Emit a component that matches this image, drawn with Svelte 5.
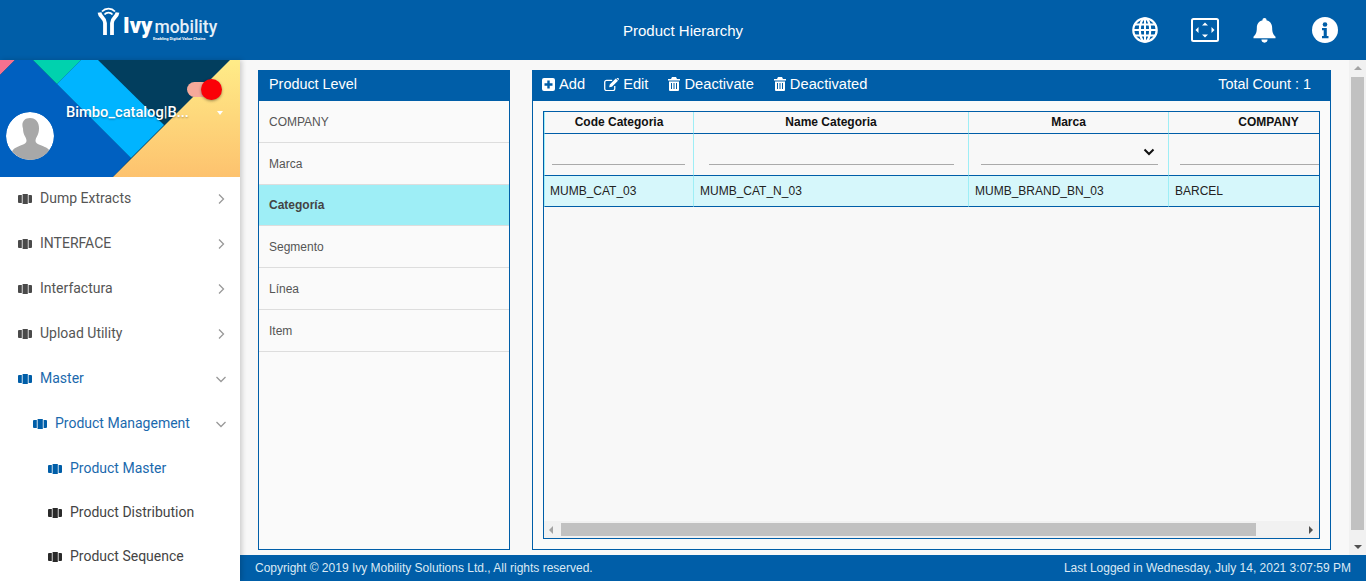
<script>
  const navIcon = "M1 1h2.800v8H1a1 1 0 0 1-1-1V2a1 1 0 0 1 1-1zM4.600 0h5.200v10H4.600zM10.600 1H13a1 1 0 0 1 1 1v6a1 1 0 0 1-1 1h-2.400z";

  const menu = [
    { label: "Dump Extracts", arrow: "right" },
    { label: "INTERFACE", arrow: "right" },
    { label: "Interfactura", arrow: "right" },
    { label: "Upload Utility", arrow: "right" },
    { label: "Master", arrow: "down", active: true },
    { label: "Product Management", arrow: "down", active: true, level: 1 },
    { label: "Product Master", active: true, level: 2 },
    { label: "Product Distribution", level: 2 },
    { label: "Product Sequence", level: 2 }
  ];

  const levels = ["COMPANY", "Marca", "Categoría", "Segmento", "Línea", "Item"];

  const columns = [
    { name: "Code Categoria", width: 150, value: "MUMB_CAT_03", pad: "0 8px 0 7px" },
    { name: "Name Categoria", width: 275, value: "MUMB_CAT_N_03", pad: "0 14px 0 15px" },
    { name: "Marca", width: 200, value: "MUMB_BRAND_BN_03", pad: "0 10px 0 12px", select: true },
    { name: "COMPANY", width: 200, value: "BARCEL", pad: "0 10px 0 11px" }
  ];

  const actions = [
    { label: "Add", icon: "add" },
    { label: "Edit", icon: "edit" },
    { label: "Deactivate", icon: "trash" },
    { label: "Deactivated", icon: "trash" }
  ];
</script>

<div class="page">
  <header class="topbar">
    <div class="logo">
      <svg class="logo-mark" viewBox="0 0 26 30" width="26" height="30" fill="none" stroke="#fff">
        <path d="M5 5.500A9 9 0 0 1 18 5.500" stroke-width="1.800" />
        <path d="M7.500 8.500A5.200 5.200 0 0 1 15.500 8.500" stroke-width="1.800" />
        <path d="M2.500 6.500C3 11.500 8 11.500 8 17V29" stroke-width="3.800" />
        <path d="M20.500 6.500C20 11.500 15 11.500 15 17V29" stroke-width="3.800" />
      </svg>
      <div class="logo-text">
        <div class="logo-name"><span class="ivy">Ivy</span><span class="mob">mobility</span></div>
        <div class="logo-tag">Enabling Digital Value Chains</div>
      </div>
    </div>
    <div class="title">Product Hierarchy</div>
    <div class="top-icons">
      <svg viewBox="0 0 26 26" width="26" height="26" fill="none" stroke="#fff" stroke-width="2.200">
        <circle cx="13" cy="13" r="11.700" />
        <ellipse cx="13" cy="13" rx="5.200" ry="11.700" />
        <path d="M13 1.300V24.700M1.300 13H24.700M3 7.500H23M3 18.500H23" stroke-width="2" />
      </svg>
      <svg viewBox="0 0 28 24" width="28" height="24">
        <rect x="1" y="1" width="26" height="22" rx="1.500" fill="none" stroke="#fff" stroke-width="2" />
        <path d="M14 4.500l3 3h-6zM14 19.500l-3-3h6zM4.500 12l3-3v6zM23.500 12l-3-3v6z" fill="#fff" />
      </svg>
      <svg class="bell" viewBox="0 0 24 26" width="23" height="25" fill="#fff">
        <path d="M12 0a2 2 0 0 1 2 2.400c4 .9 6 4 6 8 0 5.500 1.500 7 3.500 9v1.600H.5v-1.600c2-2 3.500-3.500 3.500-9 0-4 2-7.100 6-8A2 2 0 0 1 12 0z" />
        <path d="M8.800 22.500h6.400a3.200 3.200 0 0 1-6.400 0z" />
      </svg>
      <svg viewBox="0 0 26 26" width="26" height="26">
        <circle cx="13" cy="13" r="13" fill="#fff" />
        <circle cx="13" cy="7.500" r="2.300" fill="#005ea8" />
        <path d="M10 11h4.800v8H16.500v2.200h-6.500V19h1.700v-5.800H10z" fill="#005ea8" />
      </svg>
    </div>
  </header>

  <div class="body">
    <aside class="sidebar">
      <div class="banner">
        <svg class="banner-art" viewBox="0 0 240 117" width="240" height="117" preserveAspectRatio="none">
          <defs>
            <linearGradient id="sun" x1="0" y1="0" x2="0" y2="1">
              <stop offset="0" stop-color="#ffec88" />
              <stop offset="1" stop-color="#fdc26e" />
            </linearGradient>
          </defs>
          <rect width="240" height="117" fill="#023e5e" />
          <polygon points="0,0 15,0 0,15" fill="#f4718f" />
          <polygon points="15,0 33,0 131,98 113,117 0,117 0,15" fill="#0060c0" />
          <polygon points="33,0 81,0 57,24" fill="#00d2ae" />
          <polygon points="81,0 98,0 164,65 131,98 57,24" fill="#00b4ff" />
          <polygon points="230,0 240,0 240,117 113,117" fill="url(#sun)" />
        </svg>
        <div class="toggle"><span class="track"></span><span class="knob"></span></div>
        <div class="user-row">
          <div class="avatar">
            <svg viewBox="0 0 48 48" width="48" height="48">
              <circle cx="24" cy="24" r="24" fill="#fff" />
              <path d="M24 6c6 0 9 4.500 9 10.500 0 3-.8 5.500-1.800 7.500-1 2-1.700 3-1.700 5 0 2 2 3 6 4.500 5 2 7.500 3.500 8.500 6A24 24 0 0 1 24 48 24 24 0 0 1 6 39.500c1-2.500 3.500-4 8.500-6 4-1.500 6-2.500 6-4.500 0-2-.7-3-1.700-5-1-2-1.800-4.500-1.800-7.500C15 10.500 18 6 24 6z" fill="#a8a8a8" />
            </svg>
          </div>
          <div class="user-name">Bimbo_catalog|B...</div>
          <span class="caret"></span>
        </div>
      </div>

      <nav>
        {#each menu as item}
          <div class="nav-item lv{item.level ?? 0}" class:active={item.active}>
            <svg class="nav-icon" viewBox="0 0 14 10" width="14" height="10"><path d={navIcon} /></svg>
            <span class="nav-label">{item.label}</span>
            {#if item.arrow === "right"}
              <svg class="chev" viewBox="0 0 12 12" width="12" height="12"><path d="M4 1.500L8.500 6L4 10.500" /></svg>
            {:else if item.arrow === "down"}
              <svg class="chev" viewBox="0 0 12 12" width="12" height="12"><path d="M1.500 4L6 8.500L10.500 4" /></svg>
            {/if}
          </div>
        {/each}
      </nav>
    </aside>

    <div class="right">
      <div class="content-row">
        <main class="content">
          <section class="panel levels">
            <div class="panel-head">Product Level</div>
            <ul>
              {#each levels as level}
                <li class:selected={level === "Categoría"}>{level}</li>
              {/each}
            </ul>
          </section>

          <section class="panel grid-panel">
            <div class="panel-head toolbar">
              {#each actions as action}
                <span class="action">
                  {#if action.icon === "add"}
                    <svg viewBox="0 0 13 13" width="13" height="13">
                      <path fill="#fff" fill-rule="evenodd" d="M2 0h9a2 2 0 0 1 2 2v9a2 2 0 0 1-2 2H2a2 2 0 0 1-2-2V2a2 2 0 0 1 2-2zM5.300 2.500v2.800H2.500v2.400h2.800v2.800h2.400V7.700h2.800V5.300H7.700V2.500z" />
                    </svg>
                  {:else if action.icon === "edit"}
                    <svg viewBox="0 0 16 14" width="15" height="13">
                      <path fill="none" stroke="#fff" stroke-width="1.400" d="M11.500 8.500v3a2 2 0 0 1-2 2H2.700a2 2 0 0 1-2-2V4.500a2 2 0 0 1 2-2h6" />
                      <path fill="#fff" d="M5.500 10l.6-3L12.600.5l2.400 2.400-6.500 6.500zM13.200 0l2.400 2.400.2-.6a1 1 0 0 0 0-1.200L15 .1a1 1 0 0 0-1.400 0z" />
                    </svg>
                  {:else}
                    <svg class="trash" viewBox="0 0 12 14" width="12" height="14">
                      <path fill="#fff" fill-rule="evenodd" d="M4 0h4l1 2h3v1.500H0V2h3zM1 4.500h10V13a1 1 0 0 1-1 1H2a1 1 0 0 1-1-1zM3 6v6h1V6zM5.500 6v6h1V6zM8 6v6h1V6z" />
                    </svg>
                  {/if}
                  {action.label}
                </span>
              {/each}
              <span class="count">Total Count : 1</span>
            </div>

            <div class="panel-body">
              <div class="table-box">
                <div class="table-clip">
                  <table>
                    <colgroup>
                      {#each columns as col}
                        <col style="width: {col.width}px" />
                      {/each}
                    </colgroup>
                    <thead>
                      <tr class="names">
                        {#each columns as col}
                          <th>{col.name}</th>
                        {/each}
                      </tr>
                      <tr class="filters">
                        {#each columns as col}
                          <th style="padding: {col.pad}">
                            <div class="filter">
                              {#if col.select}
                                <svg viewBox="0 0 12 8" width="12" height="8"><path d="M1.500 1.500L6 6l4.500-4.500" /></svg>
                              {/if}
                            </div>
                          </th>
                        {/each}
                      </tr>
                    </thead>
                    <tbody>
                      <tr>
                        {#each columns as col}
                          <td>{col.value}</td>
                        {/each}
                      </tr>
                    </tbody>
                  </table>
                </div>
                <div class="hscroll">
                  <span class="arrow-left"></span>
                  <div class="hthumb"></div>
                  <span class="arrow-right"></span>
                </div>
              </div>
            </div>
          </section>
        </main>

        <div class="vscroll">
          <span class="arrow-up"></span>
          <div class="vthumb"></div>
          <span class="arrow-down"></span>
        </div>
      </div>

      <footer>
        <span>Copyright © 2019 Ivy Mobility Solutions Ltd., All rights reserved.</span>
        <span>Last Logged in Wednesday, July 14, 2021 3:07:59 PM</span>
      </footer>
    </div>
  </div>
</div>

<style>
  :global(body) {
    margin: 0;
    overflow: hidden;
  }

  .page {
    width: 1366px;
    height: 581px;
    display: flex;
    flex-direction: column;
    background: #f8f8f8;
    font-family: "Liberation Sans", Arial, sans-serif;
  }

  .topbar {
    height: 60px;
    flex: none;
    display: grid;
    grid-template-columns: 1fr auto 1fr;
    align-items: center;
    background: #005ea8;
    color: #fff;
  }

  .logo {
    display: flex;
    align-items: flex-start;
    padding-left: 97px;
    height: 48px;
    margin-top: -12px;
  }

  .logo-mark {
    margin-top: 6px;
  }

  .logo-text {
    margin: 17px 0 0 0;
    line-height: 1;
  }

  .logo-name {
    display: flex;
    align-items: baseline;
    height: 18px;
    font-family: Roboto, sans-serif;
  }

  .ivy {
    font-size: 22px;
    font-weight: 900;
    line-height: 18px;
  }

  .mob {
    font-size: 17.500px;
    font-weight: 500;
    line-height: 14px;
    margin-left: 2px;
    color: #e4eff8;
  }

  .logo-tag {
    font-family: Roboto, sans-serif;
    font-size: 4px;
    font-weight: 700;
    margin: 2px 0 0 30px;
    white-space: nowrap;
  }

  .title {
    font-size: 15px;
  }

  .top-icons {
    display: flex;
    align-items: center;
    justify-content: flex-end;
    gap: 33px;
    padding-right: 28px;
  }

  .bell {
    margin: 0 3px 0 1px;
  }

  .body {
    flex: 1;
    min-height: 0;
    display: flex;
  }

  .sidebar {
    width: 240px;
    flex: none;
    background: #fff;
    box-shadow: 2px 0 5px rgba(0, 0, 0, 0.18);
    position: relative;
    z-index: 1;
    overflow: hidden;
  }

  .banner {
    height: 117px;
    position: relative;
    overflow: hidden;
  }

  .banner-art {
    position: absolute;
    inset: 0;
  }

  .toggle {
    position: absolute;
    left: 187px;
    top: 19px;
    width: 35px;
    height: 22px;
  }

  .track {
    position: absolute;
    left: 0;
    top: 3px;
    width: 24px;
    height: 15px;
    border-radius: 8px;
    background: #f6a99a;
  }

  .knob {
    position: absolute;
    right: 0;
    top: 0;
    width: 21px;
    height: 21px;
    border-radius: 50%;
    background: #fb0007;
    box-shadow: 0 1px 3px rgba(0, 0, 0, 0.4);
  }

  .user-row {
    position: absolute;
    left: 6px;
    top: 52px;
    right: 17px;
    display: flex;
    align-items: flex-start;
  }

  .avatar {
    width: 48px;
    height: 48px;
    border-radius: 50%;
    overflow: hidden;
    flex: none;
  }

  .user-name {
    flex: 1;
    margin: -8px 0 0 12px;
    font-family: Roboto, sans-serif;
    font-size: 14.700px;
    font-weight: 500;
    line-height: 16px;
    white-space: nowrap;
    color: #fff;
    text-shadow: 0 1px 2px rgba(0, 0, 0, 0.35);
  }

  .caret {
    margin-top: -1px;
    width: 0;
    height: 0;
    border-left: 3.500px solid transparent;
    border-right: 3.500px solid transparent;
    border-top: 4px solid #fff;
  }

  .nav-item {
    box-sizing: border-box;
    height: 45px;
    display: flex;
    align-items: center;
    padding: 0 13px 4px 18px;
    font-family: Roboto, sans-serif;
    font-size: 14px;
    color: #555;
  }

  .nav-item.lv1 {
    padding-left: 33px;
  }

  .nav-item.lv2 {
    padding-left: 48px;
    padding-bottom: 3px;
    height: 44px;
    color: #444;
  }

  .nav-item.active {
    color: #1a69ad;
  }

  .nav-icon {
    fill: #4a4a4a;
    flex: none;
    margin: 3px 8px 0 0;
  }

  .nav-item.lv2 .nav-icon {
    fill: #2a2a2a;
  }

  .nav-item.active .nav-icon {
    fill: #005ea8;
  }

  .nav-label {
    flex: 1;
  }

  .chev {
    fill: none;
    stroke: #999;
    stroke-width: 1.300;
    margin-top: 2px;
  }

  .right {
    flex: 1;
    min-width: 0;
    display: flex;
    flex-direction: column;
  }

  .content-row {
    flex: 1;
    min-height: 0;
    display: flex;
  }

  .content {
    flex: 1;
    min-width: 0;
    display: grid;
    grid-template-columns: 252px 799px;
    gap: 22px;
    padding: 10px 0 5px 18px;
  }

  .panel {
    display: flex;
    flex-direction: column;
    border: 1px solid #005ea8;
    background: #fafafa;
    min-height: 0;
  }

  .panel-head {
    height: 26px;
    flex: none;
    margin: 0 -1px;
    padding: 0 11px 4px;
    display: flex;
    align-items: center;
    background: #005ea8;
    color: #fff;
    font-size: 14.400px;
  }

  ul {
    list-style: none;
    margin: 0;
    padding: 0;
  }

  li {
    height: 39.800px;
    display: flex;
    align-items: center;
    padding: 1px 0 0 10px;
    border-bottom: 1px solid #ddd;
    font-size: 12px;
    color: #555;
  }

  li.selected {
    background: #9eeef6;
    font-weight: 700;
    color: #444;
  }

  .toolbar {
    gap: 19px;
    padding: 0 20px 4px 10px;
  }

  .action {
    display: flex;
    align-items: center;
    gap: 4px;
    font-size: 14.700px;
  }

  .trash {
    margin-left: 1px;
  }

  .count {
    margin-left: auto;
  }

  .panel-body {
    flex: 1;
    min-height: 0;
    display: flex;
    padding: 10px;
  }

  .table-box {
    flex: 1;
    min-width: 0;
    display: flex;
    flex-direction: column;
    border: 1px solid #005ea8;
    background: #f8f8f8;
  }

  .table-clip {
    flex: 1;
    min-height: 0;
    overflow: hidden;
  }

  table {
    border-collapse: separate;
    border-spacing: 0;
    table-layout: fixed;
    width: 825px;
    font-size: 12px;
    color: #222;
  }

  th {
    padding: 0;
    border-right: 1px solid #9eeef6;
    border-bottom: 1px solid #005ea8;
    color: #111;
  }

  th:first-child,
  td:first-child {
    border-left: 1px solid #9eeef6;
  }

  .names th {
    height: 20px;
    padding-bottom: 1px;
  }

  .filters th {
    height: 41px;
    vertical-align: top;
  }

  .filter {
    height: 30px;
    display: flex;
    align-items: center;
    justify-content: flex-end;
    border-bottom: 1px solid #aaa;
  }

  .filter svg {
    fill: none;
    stroke: #111;
    stroke-width: 2;
    margin: 6px 3px 0 0;
  }

  td {
    height: 30px;
    padding: 0 5px 0 6px;
    background: #d6f7fb;
    border-right: 1px solid #9eeef6;
    border-bottom: 1px solid #005ea8;
  }

  td:first-child {
    padding-left: 5px;
  }

  .hscroll {
    height: 17px;
    flex: none;
    display: flex;
    align-items: center;
    background: #f1f1f1;
  }

  .hthumb {
    width: 695px;
    height: 13px;
    margin-left: 8px;
    background: #c1c1c1;
  }

  .arrow-left {
    margin-left: 5px;
    border-top: 4px solid transparent;
    border-bottom: 4px solid transparent;
    border-right: 4px solid #a3a3a3;
  }

  .arrow-right {
    margin-left: auto;
    margin-right: 6px;
    border-top: 4px solid transparent;
    border-bottom: 4px solid transparent;
    border-left: 4px solid #505050;
  }

  .vscroll {
    width: 17px;
    flex: none;
    display: flex;
    flex-direction: column;
    align-items: center;
    background: #f1f1f1;
  }

  .vthumb {
    width: 13px;
    height: 453px;
    margin-top: 7px;
    background: #c1c1c1;
  }

  .arrow-up {
    margin-top: 6px;
    border-left: 4px solid transparent;
    border-right: 4px solid transparent;
    border-bottom: 4px solid #a3a3a3;
  }

  .arrow-down {
    margin-top: auto;
    margin-bottom: 6px;
    border-left: 4px solid transparent;
    border-right: 4px solid transparent;
    border-top: 4px solid #505050;
  }

  footer {
    height: 26px;
    flex: none;
    display: flex;
    align-items: center;
    justify-content: space-between;
    padding: 0 15px;
    background: #005ea8;
    color: #dbe9f4;
    font-size: 12px;
  }
</style>
